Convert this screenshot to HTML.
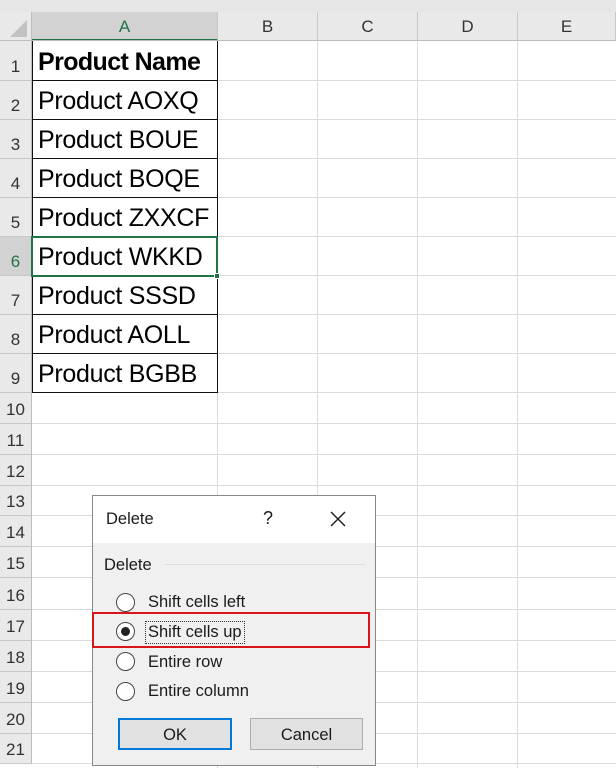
<!DOCTYPE html>
<html><head><meta charset="utf-8"><style>
body{margin:0;width:616px;height:768px;overflow:hidden;background:#fff;position:relative;font-family:"Liberation Sans",sans-serif}
.a{position:absolute;box-sizing:border-box}
.rh{position:absolute;left:0;width:32px;background:#e9e9e9;border-bottom:1px solid #c8c8c8;border-right:1px solid #bdbdbd;box-sizing:border-box;color:#333;font-size:17px;display:flex;align-items:flex-end;justify-content:center;padding-bottom:3px}
.hl{position:absolute;left:32px;right:0;height:1px;background:#dadada}
.vl{position:absolute;top:41px;bottom:0;width:1px;background:#dadada}
.ch{position:absolute;top:12px;height:29px;background:#e9e9e9;border-right:1px solid #c8c8c8;box-sizing:border-box;text-align:center;font-size:17px;line-height:29px;color:#333}
.cell{position:absolute;left:32px;width:186px;border:1.5px solid #111;border-top:none;box-sizing:border-box;font-size:25px;padding-left:5px;color:#000;white-space:nowrap;letter-spacing:-0.3px}
.dl{font-size:16.5px;color:#1a1a1a}
.rad{position:absolute;width:19px;height:19px;border:1.5px solid #444;border-radius:50%;background:#fff;box-sizing:border-box}
</style></head><body>
<div class="a" style="left:0;top:0;width:616px;height:12px;background:#e6e6e6"></div>
<div class="a" style="left:0;top:12px;width:32px;height:29px;background:#e9e9e9;border-right:1px solid #bdbdbd"></div>
<svg class="a" style="left:8px;top:18px" width="20" height="20"><polygon points="19,2 19,19 2,19" fill="#c2c2c2"/></svg>
<div class="ch" style="left:32px;width:186px;background:#d2d2d2;color:#217346;border-bottom:2px solid #217346">A</div>
<div class="ch" style="left:218px;width:100px">B</div>
<div class="ch" style="left:318px;width:100px">C</div>
<div class="ch" style="left:418px;width:100px">D</div>
<div class="ch" style="left:518px;width:98px">E</div>
<div class="a" style="left:0;top:40px;width:616px;height:1px;background:#bdbdbd"></div>

<div class="vl" style="left:317px"></div><div class="vl" style="left:417px"></div><div class="vl" style="left:517px"></div>
<div class="vl" style="left:217px;top:392px"></div>

<div class="hl" style="top:80px"></div><div class="hl" style="top:119px"></div><div class="hl" style="top:158px"></div><div class="hl" style="top:197px"></div><div class="hl" style="top:236px"></div><div class="hl" style="top:275px"></div><div class="hl" style="top:314px"></div><div class="hl" style="top:353px"></div><div class="hl" style="top:392px"></div><div class="hl" style="top:423px"></div><div class="hl" style="top:454px"></div><div class="hl" style="top:485px"></div><div class="hl" style="top:515px"></div><div class="hl" style="top:546px"></div><div class="hl" style="top:577px"></div><div class="hl" style="top:609px"></div><div class="hl" style="top:640px"></div><div class="hl" style="top:671px"></div><div class="hl" style="top:702px"></div><div class="hl" style="top:733px"></div><div class="hl" style="top:763px"></div>

<div class="rh" style="top:41px;height:40px">1</div>
<div class="rh" style="top:81px;height:39px">2</div>
<div class="rh" style="top:120px;height:39px">3</div>
<div class="rh" style="top:159px;height:39px">4</div>
<div class="rh" style="top:198px;height:39px">5</div>
<div class="rh" style="top:237px;height:39px;background:#d2d2d2;color:#217346">6</div>
<div class="rh" style="top:276px;height:39px">7</div>
<div class="rh" style="top:315px;height:39px">8</div>
<div class="rh" style="top:354px;height:39px">9</div>
<div class="rh" style="top:393px;height:31px">10</div>
<div class="rh" style="top:424px;height:31px">11</div>
<div class="rh" style="top:455px;height:31px">12</div>
<div class="rh" style="top:486px;height:30px">13</div>
<div class="rh" style="top:516px;height:31px">14</div>
<div class="rh" style="top:547px;height:31px">15</div>
<div class="rh" style="top:578px;height:32px">16</div>
<div class="rh" style="top:610px;height:31px">17</div>
<div class="rh" style="top:641px;height:31px">18</div>
<div class="rh" style="top:672px;height:31px">19</div>
<div class="rh" style="top:703px;height:31px">20</div>
<div class="rh" style="top:734px;height:30px">21</div>

<div class="cell" style="top:41px;height:40px;line-height:42px;font-weight:bold;letter-spacing:-0.6px">Product Name</div>
<div class="cell" style="top:81px;height:39px;line-height:41px">Product AOXQ</div>
<div class="cell" style="top:120px;height:39px;line-height:41px">Product BOUE</div>
<div class="cell" style="top:159px;height:39px;line-height:41px">Product BOQE</div>
<div class="cell" style="top:198px;height:39px;line-height:41px">Product ZXXCF</div>
<div class="cell" style="top:237px;height:39px;line-height:41px">Product WKKD</div>
<div class="cell" style="top:276px;height:39px;line-height:41px">Product SSSD</div>
<div class="cell" style="top:315px;height:39px;line-height:41px">Product AOLL</div>
<div class="cell" style="top:354px;height:39px;line-height:41px">Product BGBB</div>
<div class="a" style="left:31px;top:236px;width:187px;height:41px;border:2px solid #217346"></div>
<div class="a" style="left:214px;top:273px;width:6px;height:6px;background:#217346;border:1px solid #fff"></div>

<!-- dialog -->
<div class="a" style="left:92px;top:495px;width:284px;height:271px;background:#f0f0f0;border:1px solid #888"></div>
<div class="a" style="left:93px;top:496px;width:282px;height:47px;background:#fff"></div>
<div class="a dl" style="left:106px;top:510px">Delete</div>
<div class="a dl" style="left:263px;top:508px;font-size:18px">?</div>
<svg class="a" style="left:329px;top:510px" width="18" height="18"><path d="M2 2L16 16M16 2L2 16" stroke="#222" stroke-width="1.5"/></svg>
<div class="a dl" style="left:104px;top:556px">Delete</div>
<div class="a" style="left:165px;top:564px;width:200px;height:1px;background:#dcdcdc"></div>
<div class="rad" style="left:116px;top:593px"></div>
<div class="a dl" style="left:148px;top:593px">Shift cells left</div>
<div class="rad" style="left:116px;top:622px"></div>
<div class="a" style="left:121px;top:627px;width:9px;height:9px;border-radius:50%;background:#222"></div>
<div class="a dl" style="left:145px;top:621px;border:1px dotted #333;padding:1px 2px">Shift cells up</div>
<div class="rad" style="left:116px;top:652px"></div>
<div class="a dl" style="left:148px;top:653px">Entire row</div>
<div class="rad" style="left:116px;top:682px"></div>
<div class="a dl" style="left:148px;top:682px">Entire column</div>
<div class="a" style="left:92px;top:612px;width:278px;height:36px;border:2px solid #d9141b"></div>
<div class="a dl" style="left:118px;top:718px;width:114px;height:32px;background:#e1e1e1;border:2px solid #0078d7;text-align:center;line-height:30px">OK</div>
<div class="a dl" style="left:250px;top:718px;width:113px;height:32px;background:#e1e1e1;border:1px solid #adadad;text-align:center;line-height:32px">Cancel</div>
</body></html>
